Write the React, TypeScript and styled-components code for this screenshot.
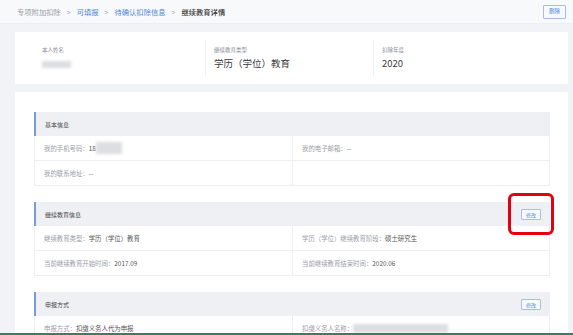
import styled, { createGlobalStyle } from "styled-components";

const GlobalStyle = createGlobalStyle`
  html, body {
    margin: 0;
    padding: 0;
    background: #f2f3f6;
  }
  body {
    font-family: "Noto Sans CJK SC", "Noto Sans", sans-serif;
  }
`

const Page = styled.div`
  width: 573px;
  height: 335px;
  display: flex;
  flex-direction: column;
  overflow: hidden;
  background: #f2f3f6;
`
const TopBar = styled.div`
  height: 24px;
  flex-shrink: 0;
  display: flex;
  align-items: center;
  justify-content: space-between;
  padding: 0 7px 0 17px;
  background: #f8f9fb;
  border-bottom: 1px solid #eceef2;
  box-sizing: border-box;
`
const Crumbs = styled.div`
  display: flex;
  align-items: center;
  gap: 6px;
  font-size: 7.3px;
`
const Crumb = styled.span<{ kind: "muted" | "link" | "current" }>`
  color: ${p => (p.kind === "muted" ? "#9a9ea6" : p.kind === "link" ? "#4f86d8" : "#333")};
  font-weight: ${p => (p.kind === "current" ? 500 : 400)};
`
const Sep = styled.span`
  color: #a8acb3;
  font-size: 7px;
`
const SmallButton = styled.button`
  height: 14px;
  padding: 0 5px;
  border: 1px solid #a9bde6;
  border-radius: 1px;
  background: #f7f9fe;
  color: #4f86d8;
  font-family: inherit;
  font-size: 5.5px;
  line-height: 1;
  cursor: pointer;
`
const Main = styled.div`
  flex: 1;
  overflow: hidden;
  padding: 8px 5px 0 15px;
`
const Summary = styled.div`
  height: 52px;
  display: flex;
  align-items: center;
  background: #fff;
`
const SummaryItem = styled.div<{ w?: number; divided?: boolean }>`
  ${p => (p.w ? `width: ${p.w}px;` : "flex: 1;")}
  box-sizing: border-box;
  height: 36px;
  display: flex;
  flex-direction: column;
  justify-content: center;
  gap: 3px;
  padding-left: ${p => (p.divided ? 8 : 27)}px;
  border-left: ${p => (p.divided ? "1px solid #eeeff2" : "none")};
`
const Label = styled.div`
  font-size: 5.5px;
  color: #8a8e96;
`
const Value = styled.div`
  font-size: 9.5px;
  color: #3a3a3a;
  line-height: 13px;
`
const Blur = styled.span<{ w: number; h: number }>`
  display: inline-block;
  width: ${p => p.w}px;
  height: ${p => p.h}px;
  background: #dcdee2;
  filter: blur(1.8px);
  vertical-align: middle;
`
const Detail = styled.div`
  margin-top: 8px;
  background: #fff;
  padding: 20px 18px 0 19px;
  display: flex;
  flex-direction: column;
  gap: 16px;
`
const Section = styled.div`
  display: flex;
  flex-direction: column;
`
const SectionHead = styled.div`
  height: 24px;
  display: flex;
  align-items: center;
  justify-content: space-between;
  padding: 0 9px 0 9px;
  background: #eef0f4;
  border-left: 2px solid #7a9bd8;
  font-size: 6px;
  color: #444;
`
const Rows = styled.div`
  border: 1px solid #eceef1;
  border-top: none;
`
const Row = styled.div`
  display: grid;
  grid-template-columns: 257px 1fr;
  height: 24px;
  & + & {
    border-top: 1px solid #eceef1;
  }
`
const Cell = styled.div`
  display: flex;
  align-items: center;
  padding-left: 9px;
  font-size: 6.4px;
  color: #9a9ea6;
  & + & {
    border-left: 1px solid #eceef1;
  }
  b {
    font-weight: 400;
    color: #555;
  }
`
const EditWrap = styled.div`
  position: relative;
  display: flex;
`
const Highlight = styled.div`
  position: absolute;
  left: -13px;
  right: -13px;
  top: -16px;
  bottom: -15px;
  border: 3.5px solid #e4000f;
  border-radius: 6px;
  pointer-events: none;
`
const EditButton = styled(SmallButton)`
  height: 11px;
  padding: 0 4px;
  font-size: 5px;
`
const BottomLine = styled.div`
  height: 2px;
  flex-shrink: 0;
  background: #3f7b62;
`

function Edit({ marked }: { marked?: boolean }) {
  return (
    <EditWrap>
      <EditButton>修改</EditButton>
      {marked && <Highlight />}
    </EditWrap>
  )
}

export default function App() {
  return (
    <Page>
      <GlobalStyle />
      <TopBar>
        <Crumbs>
          <Crumb kind="muted">专项附加扣除</Crumb>
          <Sep>&gt;</Sep>
          <Crumb kind="link">可填报</Crumb>
          <Sep>&gt;</Sep>
          <Crumb kind="link">待确认扣除信息</Crumb>
          <Sep>&gt;</Sep>
          <Crumb kind="current">继续教育详情</Crumb>
        </Crumbs>
        <SmallButton>删除</SmallButton>
      </TopBar>
      <Main>
        <Summary>
          <SummaryItem w={190}>
            <Label>本人姓名</Label>
            <Value><Blur w={29} h={7} /></Value>
          </SummaryItem>
          <SummaryItem w={168} divided>
            <Label>继续教育类型</Label>
            <Value>学历（学位）教育</Value>
          </SummaryItem>
          <SummaryItem divided>
            <Label>扣除年度</Label>
            <Value>2020</Value>
          </SummaryItem>
        </Summary>
        <Detail>
          <Section>
            <SectionHead>基本信息</SectionHead>
            <Rows>
              <Row>
                <Cell>我的手机号码：<b>18</b><Blur w={26} h={12} /></Cell>
                <Cell>我的电子邮箱：<b>--</b></Cell>
              </Row>
              <Row>
                <Cell>我的联系地址：<b>--</b></Cell>
                <Cell />
              </Row>
            </Rows>
          </Section>
          <Section>
            <SectionHead>
              继续教育信息
              <Edit marked />
            </SectionHead>
            <Rows>
              <Row>
                <Cell>继续教育类型：<b>学历（学位）教育</b></Cell>
                <Cell>学历（学位）继续教育阶段：<b>硕士研究生</b></Cell>
              </Row>
              <Row>
                <Cell>当前继续教育开始时间：<b>2017.09</b></Cell>
                <Cell>当前继续教育结束时间：<b>2020.06</b></Cell>
              </Row>
            </Rows>
          </Section>
          <Section>
            <SectionHead>
              申报方式
              <Edit />
            </SectionHead>
            <Rows>
              <Row>
                <Cell>申报方式：<b>扣缴义务人代为申报</b></Cell>
                <Cell>扣缴义务人名称：<Blur w={95} h={9} /></Cell>
              </Row>
            </Rows>
          </Section>
        </Detail>
      </Main>
      <BottomLine />
    </Page>
  )
}
